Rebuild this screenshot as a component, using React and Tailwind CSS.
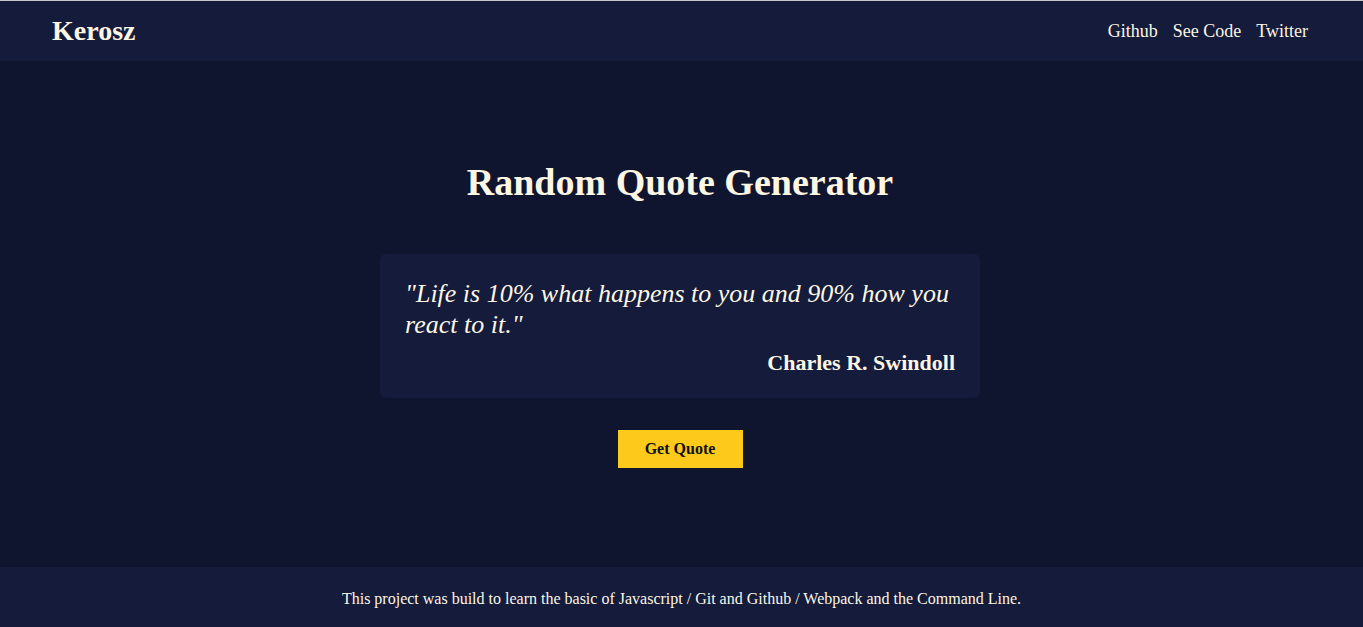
export default function App() {
  const serif = { fontFamily: '"Liberation Serif", "Times New Roman", serif' };
  return (
    <div className="flex h-[627px] flex-col bg-[#10152f] text-[#fdf6e3]" style={serif}>
      <header className="flex h-[61px] shrink-0 items-center justify-between border-t border-[#c8c8c8] bg-[#141b3b] pl-[52px] pr-[55px]">
        <div className="text-[28px] font-bold">Kerosz</div>
        <nav className="flex gap-[15px] text-[18px]">
          <a>Github</a>
          <a>See Code</a>
          <a>Twitter</a>
        </nav>
      </header>
      <main className="flex flex-1 flex-col items-center justify-center pr-[3px] pt-[2px]">
        <h1 className="text-[38px] font-bold leading-none">Random Quote Generator</h1>
        <div className="mt-[53px] w-[600px] rounded-md bg-[#141b3b] px-[25px] pb-[23px] pt-[24px]">
          <p className="text-[26px] italic leading-[31px]">"Life is 10% what happens to you and 90% how you react to it."</p>
          <p className="mt-[10px] text-right text-[22px] font-bold leading-[25px]">Charles R. Swindoll</p>
        </div>
        <button className="mt-[32px] h-[38px] w-[125px] bg-[#fdc91b] text-[16px] font-bold text-[#111]">Get Quote</button>
      </main>
      <footer className="flex h-[60px] shrink-0 items-center justify-center bg-[#141b3b] pt-[3px] text-[16px]">
        This project was build to learn the basic of Javascript / Git and Github / Webpack and the Command Line.
      </footer>
    </div>
  );
}
